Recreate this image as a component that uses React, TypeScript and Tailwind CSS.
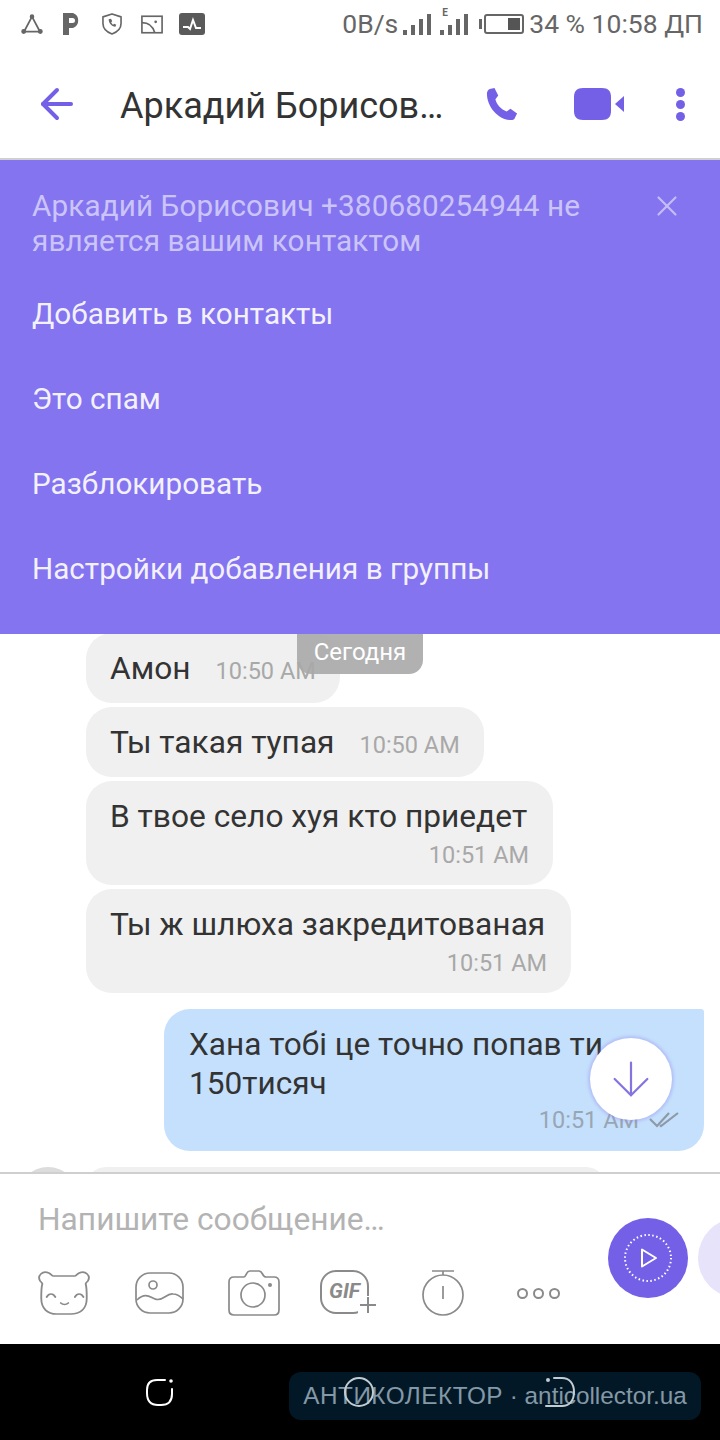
import { ArrowDown, ArrowLeft, X } from "lucide-react";

const font = { fontFamily: "Roboto, sans-serif" };

function StatusIcons() {
  return (
    <div className="flex items-center text-[#666666]">
      <svg width="22" height="21" viewBox="0 0 24 24" fill="none" stroke="currentColor" strokeWidth="2">
        <path d="M12 3 3 20h18Z" strokeLinejoin="round" />
        <circle cx="12" cy="3" r="1.6" fill="currentColor" />
        <circle cx="2.500" cy="20" r="1.800" fill="currentColor" />
        <circle cx="21.500" cy="20" r="1.800" fill="currentColor" />
      </svg>
      <svg className="ml-[20px]" width="18" height="22" viewBox="0 0 18 22" fill="currentColor">
        <path fillRule="evenodd" d="M0 0h10a8 8 0 0 1 0 15H6v7H0ZM6 5v5h3.500a2.500 2.500 0 0 0 0-5Z" />
      </svg>
      <svg className="ml-[21px]" width="20" height="22" viewBox="0 0 21 23" fill="none" stroke="currentColor" strokeWidth="1.700">
        <path d="M10.500 1 20 4v7c0 5-4 9-9.500 11C5 20 1 16 1 11V4Z" strokeLinejoin="round" />
        <path d="M7 6.500c0 4 3 7.500 7 8l1-2.300-2.300-1-1 1c-1-.5-1.700-1.500-2-2.500l1-1L9.500 6Z" fill="currentColor" stroke="none" />
      </svg>
      <svg className="ml-[19px]" width="22" height="19" viewBox="0 0 24 20" fill="none" stroke="currentColor" strokeWidth="1.800">
        <rect x="1" y="1" width="22" height="18" />
        <path d="M1 8c7 0 12 4 14 11" />
        <circle cx="16" cy="7" r="1.500" fill="currentColor" stroke="none" />
      </svg>
      <svg className="ml-[16px]" width="26" height="22" viewBox="0 0 26 22">
        <rect width="26" height="22" rx="3" fill="#5a5a5a" />
        <path d="M4 14h5l2 2 3-9 3 8h5" fill="none" stroke="#fff" strokeWidth="2" />
      </svg>
    </div>
  );
}

function SignalBars({ label }: { label?: boolean }) {
  return (
    <div className="relative flex h-[22px] items-end gap-[4px]">
      {label && <span className="absolute top-[-5px] left-[2px] text-[10px] leading-none font-bold text-[#666666]">E</span>}
      <div className="h-[5px] w-[4px] bg-[#666666]" />
      <div className="h-[10px] w-[4px] bg-[#666666]" />
      <div className="h-[16px] w-[4px] bg-[#666666]" />
      <div className="h-[21px] w-[4px] bg-[#666666]" />
    </div>
  );
}

function StatusBar() {
  return (
    <div className="flex h-[52px] items-center justify-between pr-[17px] pb-[4px] pl-[21px]">
      <StatusIcons />
      <div className="flex items-center text-[26.5px] text-[#666666]">
        <span className="mr-[5px]">0B/s</span>
        <SignalBars />
        <div className="w-[9px]" />
        <SignalBars label />
        <div className="ml-[11px] h-[10px] w-[3px] bg-[#666666]" />
        <div className="ml-[2px] flex h-[20px] w-[40px] items-center justify-end rounded-[3px] border-2 border-[#666666] pr-[2px]">
          <div className="h-[12px] w-[12px] bg-[#555555]" />
        </div>
        <span className="ml-[5px]">34 % 10:58 ДП</span>
      </div>
    </div>
  );
}

function Header() {
  return (
    <div className="flex h-[108px] items-center border-b-2 border-[#cfcfcf] pb-[2px]">
      <ArrowLeft className="ml-[33px] h-[48px] w-[48px] text-[#7360e6]" strokeWidth={2} />
      <div className="ml-[39px] w-[366px] pt-[3px] text-[36px] whitespace-nowrap text-[#333333]">Аркадий Борисов…</div>
      <svg width="32" height="32" viewBox="0 0 34 34" fill="#7360e6">
        <path d="M4 1 9 0l4 8-3 4c1 5 6 11 12 13l4-3 7 5-2 4c-1 3-3 3-6 3C13 33 1 20 1 6c0-2 1-4 3-5Z" />
      </svg>
      <svg className="ml-[56px]" width="50" height="32" viewBox="0 0 50 32" fill="#7360e6">
        <path d="M9 0h19c6 0 9 3 9 9v14c0 6-3 9-9 9H9c-6 0-9-3-9-9V9c0-6 3-9 9-9Z" />
        <path d="M50 8v16l-9-8Z" />
      </svg>
      <div className="ml-[52px] flex flex-col gap-[3px]">
        <div className="h-[9px] w-[9px] rounded-full bg-[#7360e6]" />
        <div className="h-[9px] w-[9px] rounded-full bg-[#7360e6]" />
        <div className="h-[9px] w-[9px] rounded-full bg-[#7360e6]" />
      </div>
    </div>
  );
}

const actions = ["Добавить в контакты", "Это спам", "Разблокировать", "Настройки добавления в группы"];

function Banner() {
  return (
    <div className="relative h-[474px] bg-[#8474f0] pt-[28px] pl-[32px]">
      <div className="w-[590px] text-[29.7px] leading-[35px] tracking-[0.1px] text-[#cbc4f8]">
        Аркадий Борисович +380680254944 не является вашим контактом
      </div>
      <X className="absolute top-[29px] right-[36px] h-[34px] w-[34px] text-[#c5bdf7]" strokeWidth={1.500} />
      <div className="mt-[14px] flex flex-col">
        {actions.map((a) => (
          <div key={a} className="flex h-[85px] items-center text-[29.7px] text-[#f3f1fe]">
            {a}
          </div>
        ))}
      </div>
    </div>
  );
}

function Incoming({ text, time, inline, width }: { text: string; time: string; inline?: boolean; width: string }) {
  return (
    <div className={`${width} shrink-0 rounded-[26px] bg-[#f0f0f0] px-[24px] ${inline ? "flex h-[70px] items-center pt-[2px]" : "h-[104px] pt-[16px]"}`}>
      <span className="text-[31.7px] leading-[40px] whitespace-nowrap text-[#333333]">{text}</span>
      <div className={`text-[23.5px] leading-[30px] text-[#a8a8a8] ${inline ? "mt-[3px] ml-[25px] whitespace-nowrap" : "mt-[3px] text-right"}`}>{time}</div>
    </div>
  );
}

function Messages() {
  return (
    <div className="relative flex h-[538px] flex-col overflow-hidden pl-[86px]">
      <div className="mt-[-1px] flex shrink-0 flex-col gap-[4px]">
        <Incoming text="Амон" time="10:50 AM" inline width="w-[254px]" />
        <Incoming text="Ты такая тупая" time="10:50 AM" inline width="w-[398px]" />
        <Incoming text="В твое село хуя кто приедет" time="10:51 AM" width="w-[467px]" />
        <Incoming text="Ты ж шлюха закредитованая" time="10:51 AM" width="w-[485px]" />
      </div>
      <div className="mt-[16px] mr-[16px] ml-auto h-[142px] w-[540px] shrink-0 rounded-tl-[26px] rounded-tr-[3px] rounded-br-[26px] rounded-bl-[26px] bg-[#c5e0fc] px-[25px] pt-[16px]">
        <div className="text-[31.6px] leading-[39px] text-[#333333]">Хана тобі це точно попав ти 150тисяч</div>
        <div className="flex items-center justify-end gap-[10px] pt-[2px]">
          <span className="text-[23.5px] leading-[30px] text-[#98a6b4]">10:51 AM</span>
          <svg width="30" height="16" viewBox="0 0 30 16" fill="none" stroke="#8d9aa7" strokeWidth="2.200">
            <path d="M1 7l7 7L20 1" />
            <path d="M11 13l1 1L29 1" />
          </svg>
        </div>
      </div>
      <div className="mt-[16px] flex shrink-0 items-start">
        <div className="ml-[-68px] h-[60px] w-[60px] shrink-0 rounded-full bg-[#dcdcdc]" />
        <div className="ml-[8px] h-[40px] w-[520px] rounded-[26px] bg-[#f0f0f0]" />
      </div>

      <div className="absolute top-[-4px] left-[297px] flex h-[44px] w-[126px] items-center justify-center rounded-b-[14px] bg-[#a9a9a9]/90 text-[24px] text-white">
        Сегодня
      </div>
      <div className="absolute top-[404px] left-[590px] flex h-[82px] w-[82px] items-center justify-center rounded-full bg-white shadow-[0_0_3px_2px_rgba(132,116,240,0.3)]">
        <ArrowDown className="h-[56px] w-[56px] text-[#8474e0]" strokeWidth={0.950} />
      </div>
    </div>
  );
}

function Toolbar() {
  return (
    <div className="flex items-center text-[#8a8a8a]">
      <svg className="ml-[38px]" width="52" height="46" viewBox="1 0 48 46" preserveAspectRatio="none" fill="none" stroke="currentColor" strokeWidth="1.700">
        <path d="M11 3c-6-3-11 3-8 8 1 1 2 2 2 3-1 3-1 8-1 14 0 11 6 16 14 16h13c9 0 15-5 15-16 0-6 0-11-1-14 0-1 1-2 2-3 3-5-2-11-8-8-2 1-3 3-4 3H15c-1 0-2-2-4-3Z" />
        <path d="M9 27c2-4 6-4 8 0M35 27c2-4 6-4 8 0M22 33c2 2 5 2 7 0" strokeLinecap="round" />
      </svg>
      <svg className="ml-[45px]" width="50" height="42" viewBox="0 0 50 42" fill="none" stroke="currentColor" strokeWidth="1.700">
        <rect x="1" y="1" width="47" height="40" rx="14" />
        <circle cx="18" cy="13" r="4" />
        <path d="M2 28c8-8 13-3 18-1 8 3 11-6 18-5 4 0 8 3 10 5" />
      </svg>
      <svg className="ml-[43px]" width="52" height="46" viewBox="0 0 52 46" fill="none" stroke="currentColor" strokeWidth="1.700">
        <path d="M6 7h10c2 0 2-6 6-6h9c4 0 3 6 7 6h8c3 0 5 2 5 5v28c0 3-2 5-5 5H6c-3 0-5-2-5-5V12c0-3 2-5 5-5Z" />
        <circle cx="25" cy="25" r="12" />
        <circle cx="42" cy="15" r="2" fill="currentColor" stroke="none" />
      </svg>
      <div className="relative ml-[40px] h-[46px] w-[52px]">
        <div className="h-[44px] w-[49px] rounded-[16px] border-2 border-[#8a8a8a]" />
        <span className="absolute top-[9px] left-[9px] text-[21px] leading-[24px] font-bold italic">GIF</span>
        <div className="absolute top-[26px] right-[-6px] h-[20px] w-[20px] bg-white" />
        <div className="absolute top-[34px] right-[-4px] h-[2px] w-[16px] bg-[#8a8a8a]" />
        <div className="absolute top-[27px] right-[3px] h-[16px] w-[2px] bg-[#8a8a8a]" />
      </div>
      <svg className="ml-[50px]" width="42" height="46" viewBox="0 0 42 46" fill="none" stroke="currentColor" strokeWidth="1.700">
        <circle cx="21" cy="25" r="20" />
        <path d="M10 1h22M21 1v4M21 16v13" />
      </svg>
      <div className="ml-[53px] flex gap-[5px]">
        <div className="h-[11px] w-[11px] rounded-full border-2 border-[#8a8a8a]" />
        <div className="h-[11px] w-[11px] rounded-full border-2 border-[#8a8a8a]" />
        <div className="h-[11px] w-[11px] rounded-full border-2 border-[#8a8a8a]" />
      </div>
    </div>
  );
}

function Composer() {
  return (
    <div className="relative h-[172px] border-t-2 border-[#cfcfcf] bg-white">
      <div className="pt-[27px] pl-[38px] text-[31.7px] leading-[38px] text-[#b3b3b3]">Напишите сообщение…</div>
      <div className="mt-[31px]">
        <Toolbar />
      </div>
      <div className="absolute top-[44px] left-[608px] flex h-[80px] w-[80px] items-center justify-center rounded-full bg-[#7360e6]">
        <svg width="50" height="50" viewBox="0 0 50 50" fill="none" stroke="#fff">
          <circle cx="25" cy="25" r="23" strokeWidth="2" strokeDasharray="1.500 2.500" />
          <path d="M19 16.500v17L33 25Z" strokeWidth="2" strokeLinejoin="round" />
        </svg>
      </div>
      <div className="absolute top-[44px] left-[698px] h-[80px] w-[80px] rounded-full bg-[#e6e3fa]" />
    </div>
  );
}

function NavBar() {
  return (
    <div className="relative flex h-[96px] items-start bg-black">
      <svg className="mt-[34px] ml-[146px]" width="28" height="28" viewBox="0 0 28 28" fill="none" stroke="#fff" strokeWidth="2">
        <path d="M19 2h-8C5 2 1 5 1 12v3c0 8 4 12 11 12h3c8 0 11-4 11-11v-5" strokeLinecap="round" />
        <circle cx="25" cy="3" r="1.800" fill="#fff" stroke="none" />
      </svg>
      <div className="absolute top-[28px] left-[289px] flex h-[48px] w-[412px] items-center justify-center rounded-[12px] bg-[#031826] text-[24.3px] whitespace-nowrap text-[#8499a7]" style={{ fontFamily: '"Liberation Sans", sans-serif' }}>
        <span className="tracking-[0.5px]">АНТИКОЛЕКТОР</span>&nbsp;·&nbsp;anticollector.ua
      </div>
      <div className="absolute top-[33px] left-[344px] h-[30px] w-[30px] rounded-full border-2 border-[#c3ccd2]" />
      <svg className="absolute top-[33px] left-[545px]" width="30" height="30" viewBox="0 0 30 30" fill="none" stroke="#c3ccd2" strokeWidth="2">
        <path d="M9 1h8c7 0 12 5 12 14s-5 14-12 14H1" strokeLinecap="round" />
        <circle cx="3" cy="3" r="2" fill="#c3ccd2" stroke="none" />
      </svg>
    </div>
  );
}

export default function App() {
  return (
    <div className="flex h-[1440px] w-[720px] flex-col overflow-hidden bg-white" style={font}>
      <StatusBar />
      <Header />
      <Banner />
      <Messages />
      <Composer />
      <NavBar />
    </div>
  );
}
